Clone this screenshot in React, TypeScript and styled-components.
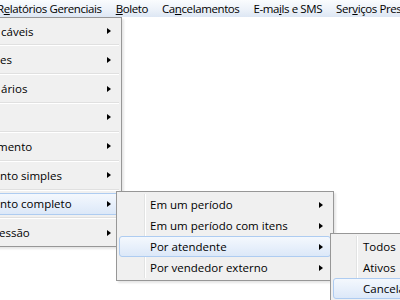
import React from "react";
import styled, { createGlobalStyle } from "styled-components";

const Global = createGlobalStyle`
  html, body { margin: 0; padding: 0; background: #ffffff; overflow: hidden; }
  body { font-family: "Open Sans", "Noto Sans", "DejaVu Sans", sans-serif; font-size: 11.5px; color: #000; }
`;

const Screen = styled.div`
  position: relative;
  width: 400px;
  height: 300px;
  overflow: hidden;
  background: #ffffff;
`;

const MenuBar = styled.div`
  display: flex;
  align-items: center;
  height: 17px;
  margin-left: -10px;
  letter-spacing: -0.4px;
  background: linear-gradient(#fafcfe 0%, #edf2f9 55%, #dde7f4 100%);
  white-space: nowrap;
`;

const BarItem = styled.div`
  padding: 0 7px;
  line-height: 17px;
  flex: none;
`;

const U = styled.span`
  text-decoration: underline;
  text-underline-offset: 1px;
`;

const Menu = styled.div<{ $left: number; $top: number; $width: number }>`
  position: absolute;
  left: ${(p) => p.$left}px;
  top: ${(p) => p.$top}px;
  width: ${(p) => p.$width}px;
  box-sizing: border-box;
  background: #f0f0f0;
  border: 1px solid #979797;
  padding: 2px;
  box-shadow: 2px 2px 2px rgba(0, 0, 0, 0.1);
`;

const Gutter = styled.div<{ $x: number }>`
  position: absolute;
  top: 2px;
  bottom: 2px;
  left: ${(p) => p.$x}px;
  width: 1px;
  background: #e2e3e3;
  border-right: 1px solid #ffffff;
`;

const Item = styled.div<{ $h: number; $pad: number; $active?: boolean }>`
  position: relative;
  display: flex;
  align-items: center;
  height: ${(p) => p.$h}px;
  box-sizing: border-box;
  padding-left: ${(p) => p.$pad}px;
  padding-right: 7px;
  white-space: nowrap;
  border: 1px solid ${(p) => (p.$active ? "#aeccf1" : "transparent")};
  border-radius: 3px;
  background: ${(p) =>
    p.$active ? "linear-gradient(#f4f8fd 0%, #e8f0fb 50%, #dce8f8 100%)" : "transparent"};
`;

const Label = styled.span<{ $shift?: number }>`
  flex: 1;
  margin-left: ${(p) => p.$shift ?? 0}px;
`;

const Arrow = styled.span`
  width: 0;
  height: 0;
  border-top: 3.5px solid transparent;
  border-bottom: 3.5px solid transparent;
  border-left: 4px solid #000;
`;

const Separator = styled.div<{ $h: number }>`
  height: ${(p) => p.$h}px;
  display: flex;
  align-items: center;
  &::after {
    content: "";
    display: block;
    width: 100%;
    height: 1px;
    background: #e0e0e0;
    border-bottom: 1px solid #ffffff;
  }
`;

const mainItems: { t: string; s: number }[] = [
  { t: "cáveis", s: 1 },
  { t: "es", s: 0 },
  { t: "ários", s: 1 },
  { t: "", s: 0 },
  { t: "mento", s: -3 },
  { t: "nto simples", s: 0 },
  { t: "nto completo", s: 0 },
  { t: "essão", s: -1 },
];

const sub1 = ["Em um período", "Em um período com itens", "Por atendente", "Por vendedor externo"];
const sub2 = ["Todos", "Ativos", "Cancelados"];

export default function App() {
  return (
    <Screen>
      <Global />
      <MenuBar>
        <BarItem>R<U>e</U>latórios Gerenciais</BarItem>
        <BarItem><U>B</U>oleto</BarItem>
        <BarItem>Ca<U>n</U>celamentos</BarItem>
        <BarItem>E-ma<U>i</U>ls e SMS</BarItem>
        <BarItem>Ser<U>v</U>iços Prestados</BarItem>
      </MenuBar>

      <Menu $left={-32} $top={17} $width={154}>
        {mainItems.map((m, i) => (
          <React.Fragment key={i}>
            {i > 0 && <Separator $h={6.83} />}
            <Item $h={22} $pad={28} $active={i === 6}>
              <Label $shift={m.s}>{m.t}</Label>
              <Arrow />
            </Item>
          </React.Fragment>
        ))}
      </Menu>

      <Menu $left={116} $top={191} $width={218}>
        <Gutter $x={27} />
        {sub1.map((t, i) => (
          <Item key={t} $h={21} $pad={30} $active={i === 2}>
            <Label>{t}</Label>
            <Arrow />
          </Item>
        ))}
      </Menu>

      <Menu $left={330} $top={233} $width={120}>
        <Gutter $x={25} />
        {sub2.map((t, i) => (
          <Item key={t} $h={21} $pad={29} $active={i === 2}>
            <Label>{t}</Label>
          </Item>
        ))}
      </Menu>
    </Screen>
  );
}
